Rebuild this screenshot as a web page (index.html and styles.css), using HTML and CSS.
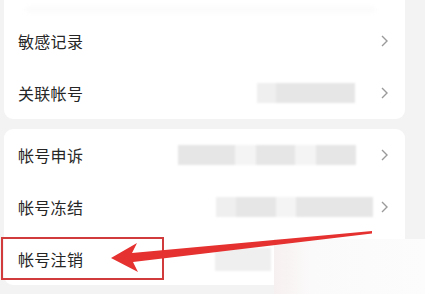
FILE: index.html
```html
<!DOCTYPE html>
<html lang="zh">
<head>
<meta charset="utf-8">
<link rel="stylesheet" href="styles.css">
</head>
<body>
<div class="page">
  <div class="card card-top">
    <div class="ghost"></div>
    <div class="row">
      <span class="label">敏感记录</span>
      <span class="spacer"></span>
      <svg class="chev" viewBox="0 0 7 12"><polyline points="1,1 6,6 1,11"/></svg>
    </div>
    <div class="row">
      <span class="label">关联帐号</span>
      <span class="spacer"></span>
      <span class="value v1">
        <i class="blob light" style="width:19px"></i><i class="blob" style="width:79px"></i>
      </span>
      <svg class="chev" viewBox="0 0 7 12"><polyline points="1,1 6,6 1,11"/></svg>
    </div>
  </div>

  <div class="card card-bottom">
    <div class="row">
      <span class="label">帐号申诉</span>
      <span class="spacer"></span>
      <span class="value v2">
        <i class="blob" style="width:57px"></i><i class="gap" style="width:21px"></i><i class="blob" style="width:39px"></i><i class="gap" style="width:21px"></i><i class="blob" style="width:40px"></i>
      </span>
      <svg class="chev" viewBox="0 0 7 12"><polyline points="1,1 6,6 1,11"/></svg>
    </div>
    <div class="row">
      <span class="label">帐号冻结</span>
      <span class="spacer"></span>
      <span class="value v3">
        <i class="blob light" style="width:20px"></i><i class="blob" style="width:40px"></i><i class="gap" style="width:20px"></i><i class="blob" style="width:77px"></i>
      </span>
      <svg class="chev" viewBox="0 0 7 12"><polyline points="1,1 6,6 1,11"/></svg>
    </div>
    <div class="row">
      <span class="label">帐号注销</span>
      <span class="spacer"></span>
      <span class="value v4">
        <i class="blob light" style="width:56px"></i>
      </span>
      <svg class="chev hidden" viewBox="0 0 7 12"><polyline points="1,1 6,6 1,11"/></svg>
    </div>
  </div>
</div>

<div class="highlight-box"></div>
<div class="watermark"></div>
<svg class="arrow" viewBox="0 0 425 294" width="425" height="294">
  <polygon points="111,258 137,243 132,253 372,231 372,233.5 133,262 138,272"/>
</svg>
</body>
</html>
```

FILE: styles.css
```css
html, body {
  margin: 0;
  padding: 0;
}
body {
  width: 425px;
  height: 294px;
  overflow: hidden;
  background: #f3f3f3;
  font-family: "Noto Sans CJK SC", "Noto Sans", sans-serif;
  position: relative;
}
.page {
  display: flex;
  flex-direction: column;
  gap: 10px;
  padding: 0 20px 0 4px;
}
.card {
  background: #ffffff;
  border-radius: 9px;
  display: flex;
  flex-direction: column;
}
.card-top {
  border-radius: 0 0 9px 9px;
  padding-top: 15px;
  position: relative;
}
.ghost {
  position: absolute;
  left: 22px;
  right: 30px;
  top: 7px;
  height: 5px;
  background: #fafafa;
  filter: blur(2px);
}
.row {
  height: 52px;
  display: flex;
  align-items: center;
  padding: 0 17px 0 14px;
}
.label {
  font-size: 16px;
  color: #262626;
  letter-spacing: 0.3px;
}
.spacer {
  flex: 1;
}
.value {
  display: flex;
  height: 20px;
  filter: blur(1.2px);
}
.blob {
  display: block;
  height: 100%;
  background: #e6e6e6;
}
.blob.light {
  background: #efefef;
}
.gap {
  display: block;
  height: 100%;
  background: #f4f4f4;
}
.v1 { margin-right: 26px; }
.v2 { margin-right: 25px; }
.v3 { margin-right: 8px; }
.v4 { margin-right: 110px; height: 23px; }
.chev {
  width: 7px;
  height: 12px;
  fill: none;
  stroke: #9a9a9a;
  stroke-width: 1.4;
}
.chev.hidden {
  visibility: hidden;
}
.highlight-box {
  position: absolute;
  left: 1px;
  top: 237px;
  width: 159px;
  height: 39px;
  border: 2px solid #d23b3c;
}
.watermark {
  position: absolute;
  left: 274px;
  top: 239px;
  width: 151px;
  height: 55px;
  background: linear-gradient(90deg, #f7f0f0 0%, #fbfafa 25%, #fcfcfc 100%);
}
.arrow {
  position: absolute;
  left: 0;
  top: 0;
}
.arrow polygon {
  fill: #e5312f;
}
```
